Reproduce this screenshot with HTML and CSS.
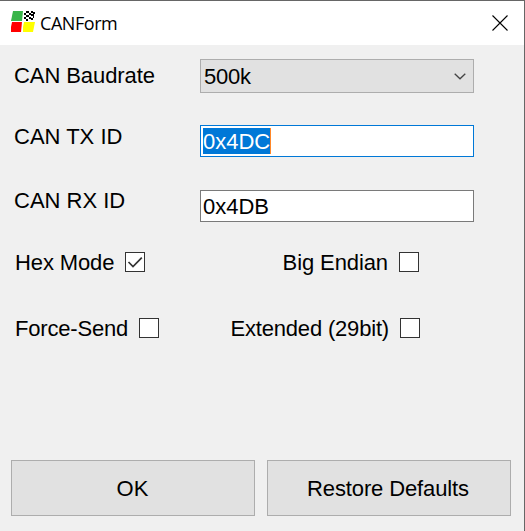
FILE: index.html
```
<!DOCTYPE html>
<html lang="en">
<head>
<meta charset="utf-8">
<title>CANForm</title>
<link rel="stylesheet" href="styles.css">
</head>
<body>
<main class="window">
  <header class="titlebar">
    <svg class="logo" width="25" height="22" viewBox="0 0 25 22">
      <path fill="#39b54a" d="M2 0H12L11 10H0L1 5Z"/>
      <path fill="#f00" d="M1 11H11L10 21H0V16Z"/>
      <path fill="#ff0" d="M13 11H24L22 21H12V16Z"/>
      <g fill="#000" shape-rendering="crispEdges">
        <path d="M15 0h3v2h-3zM20 0h2v2h-2zM13 2h2v2h-2zM18 2h2v2h-2zM22 1h2v2h-2zM15 4h3v2h-3zM20 3h3v2h-3zM13 6h2v2h-2zM18 6h2v2h-2zM22 5h1v2h-1zM15 8h2v2h-2zM20 7h2v2h-2z"/>
      </g>
    </svg>
    <h1 class="title">CANForm</h1>
    <svg class="close" width="16" height="16" viewBox="0 0 16 16"><path d="M.5 .5 15.5 15.5M15.5 .5 .5 15.5"/></svg>
  </header>
  <form class="form">
    <div class="row">
      <span class="label">CAN Baudrate</span>
      <div class="field select">500k
        <svg class="chevron" width="12" height="7" viewBox="0 0 12 7"><path d="M.7 .7 6 5.8 11.3 .7"/></svg>
      </div>
    </div>
    <div class="row">
      <span class="label">CAN TX ID</span>
      <div class="field input focused"><span class="selection">0x4DC</span></div>
    </div>
    <div class="row">
      <span class="label">CAN RX ID</span>
      <div class="field input">0x4DB</div>
    </div>
    <div class="checks">
      <div class="check"><span class="hex">Hex Mode</span><span class="box"><svg width="18" height="18" viewBox="0 0 18 18"><path d="M2.5 9 7 13.5 15.8 4.7"/></svg></span></div>
      <div class="check end"><span class="endian">Big Endian</span><span class="box"></span></div>
      <div class="check"><span class="tight">Force-Send</span><span class="box"></span></div>
      <div class="check end extended"><span class="tight">Extended (29bit)</span><span class="box"></span></div>
    </div>
    <div class="buttons">
      <div class="button ok">OK</div>
      <div class="button restore">Restore Defaults</div>
    </div>
  </form>
</main>
</body>
</html>
```
FILE: styles.css
```
* { box-sizing: border-box; }
body { margin: 0; }
.window {
  width: 525px;
  height: 531px;
  display: flex;
  flex-direction: column;
  border-top: 1px solid #666;
  border-right: 1px solid #666;
  background: #f0f0f0;
  color: #000;
  font: 22px/25px "Liberation Sans", Arial, sans-serif;
  white-space: nowrap;
}
.titlebar {
  height: 44px;
  display: flex;
  align-items: flex-start;
  padding: 10px 16px 0 11px;
  background: #fff;
}
.title {
  margin: 0 0 0 4px;
  font: 400 18px/25px "Open Sans", "Noto Sans", sans-serif;
  letter-spacing: -0.45px;
}
.close { margin: 4px 0 0 auto; }
.close path { fill: none; stroke: #000; stroke-width: 1.1; }
.form {
  flex: 1;
  display: flex;
  flex-direction: column;
  padding: 14px 13px 15px 11px;
}
.row {
  display: grid;
  grid-template-columns: 189px 274px;
  align-items: start;
  height: 65px;
}
.row:first-child { height: 66px; }
.label { padding: 4px 0 0 3px; }
.row:first-child .label { letter-spacing: -0.08px; }
.row + .row .label { margin-top: -5px; }
.row + .row + .row .label { margin-top: -6px; }
.field { border: 1px solid #7a7a7a; background: #fff; }
.select {
  height: 34px;
  display: flex;
  justify-content: space-between;
  padding: 4px 7px 0 3px;
  border-color: #adadad;
  background: #e1e1e1;
  letter-spacing: -0.2px;
}
.chevron { margin-top: 9px; }
.chevron path { fill: none; stroke: #444; stroke-width: 1.3; }
.input { height: 32px; padding: 3px 2px; }
.focused { padding: 2px; border-color: #0078d7; }
.selection {
  display: block;
  width: 68px;
  height: 26px;
  padding-top: 1px;
  border-right: 1px solid #ff8728;
  background: #0078d7;
  color: #fff;
}
.checks {
  display: grid;
  grid-template-columns: 200px 208px;
  grid-auto-rows: 66px;
  margin: -5px 0 0 4px;
}
.check { display: flex; align-items: flex-start; gap: 11px; }
.end { justify-content: flex-end; margin-right: 4px; }
.hex { width: 99px; letter-spacing: -0.12px; }
.endian { letter-spacing: -0.1px; }
.tight { letter-spacing: -0.18px; }
.extended { margin-right: 3px; }
.box {
  width: 20px;
  height: 20px;
  margin-top: 2px;
  border: 1px solid #333;
  background: #fff;
}
.box svg { display: block; }
.box path { fill: none; stroke: #333; stroke-width: 1.7; }
.buttons {
  display: grid;
  grid-template-columns: 244px 244px;
  gap: 12px;
  margin-top: auto;
}
.button {
  height: 56px;
  padding-top: 15px;
  border: 1px solid #adadad;
  background: #e1e1e1;
  text-align: center;
}
.ok { padding-right: 1px; }
.restore { padding-right: 2px; letter-spacing: -0.12px; }
```
